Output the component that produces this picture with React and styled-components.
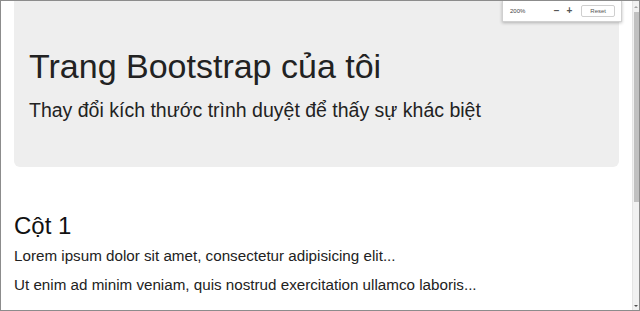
import React from "react";
import styled, { createGlobalStyle } from "styled-components";

const Global = createGlobalStyle`
  html, body { margin: 0; padding: 0; background: #fff; }
  body { font-family: "Liberation Sans", Arial, sans-serif; color: #333; }
`;

const Frame = styled.div`
  width: 640px;
  height: 311px;
  box-sizing: border-box;
  border: 1px solid #8c8c8c;
  display: flex;
  overflow: hidden;
  position: relative;
`;

const Viewport = styled.div`
  flex: 1;
  position: relative;
  overflow: hidden;
  padding: 0 13px 0 13px;
`;

const Jumbotron = styled.div`
  background: #eeeeee;
  border-radius: 0 0 6px 6px;
  padding: 48px 15px 43px;
`;

const Title = styled.h1`
  margin: 0;
  font-size: 34px;
  line-height: 35px;
  font-weight: 400;
  color: #222;
`;

const Lead = styled.p`
  margin: 12px 0 0;
  font-size: 19.5px;
  line-height: 28px;
  color: #222;
`;

const Column = styled.div`
  padding-top: 46px;
`;

const Heading = styled.h2`
  margin: 0 0 7px;
  font-size: 24px;
  line-height: 26px;
  font-weight: 400;
  color: #111;
`;

const Para = styled.p`
  margin: 0 0 9px;
  font-size: 15.2px;
  line-height: 20px;
  color: #222;
`;

const ZoomBar = styled.div`
  position: absolute;
  top: -1px;
  right: 10px;
  width: 120px;
  height: 22px;
  background: #fff;
  border: 1px solid #d0d0d0;
  box-shadow: 0 1px 3px rgba(0, 0, 0, 0.25);
  display: flex;
  align-items: center;
  padding: 0 6px 0 7px;
  box-sizing: border-box;
  font-size: 6px;
  color: #444;
`;

const Percent = styled.span`
  flex: 1;
`;

const Sign = styled.span`
  font-size: 10px;
  font-weight: 700;
  color: #555;
  margin-right: 7px;
  line-height: 1;
`;

const ResetBtn = styled.span`
  border: 1px solid #cfcfcf;
  border-radius: 2px;
  padding: 2px 8px;
  font-size: 6px;
  color: #555;
  margin-left: 2px;
`;

const Scrollbar = styled.div`
  width: 7px;
  background: #f1f1f1;
  display: flex;
  flex-direction: column;
  align-items: center;
  padding: 5px 0 3px;
  box-sizing: border-box;
  border-left: 1px solid #e4e4e4;
`;

const Arrow = styled.div`
  width: 0;
  height: 0;
  border-left: 2px solid transparent;
  border-right: 2px solid transparent;
  ${(p) => (p.$down ? "border-top: 2px solid #505050;" : "border-bottom: 2px solid #a3a3a3;")}
`;

const Thumb = styled.div`
  width: 5px;
  height: 190px;
  background: #c1c1c1;
  margin-top: 4px;
`;

const Spacer = styled.div`
  flex: 1;
`;

export default function App() {
  return (
    <>
      <Global />
      <Frame>
        <Viewport>
          <Jumbotron>
            <Title>Trang Bootstrap của tôi</Title>
            <Lead>Thay đổi kích thước trình duyệt để thấy sự khác biệt</Lead>
          </Jumbotron>
          <Column>
            <Heading>Cột 1</Heading>
            <Para>Lorem ipsum dolor sit amet, consectetur adipisicing elit...</Para>
            <Para>Ut enim ad minim veniam, quis nostrud exercitation ullamco laboris...</Para>
          </Column>
          <ZoomBar>
            <Percent>200%</Percent>
            <Sign>−</Sign>
            <Sign>+</Sign>
            <ResetBtn>Reset</ResetBtn>
          </ZoomBar>
        </Viewport>
        <Scrollbar>
          <Arrow />
          <Thumb />
          <Spacer />
          <Arrow $down />
        </Scrollbar>
      </Frame>
    </>
  );
}
